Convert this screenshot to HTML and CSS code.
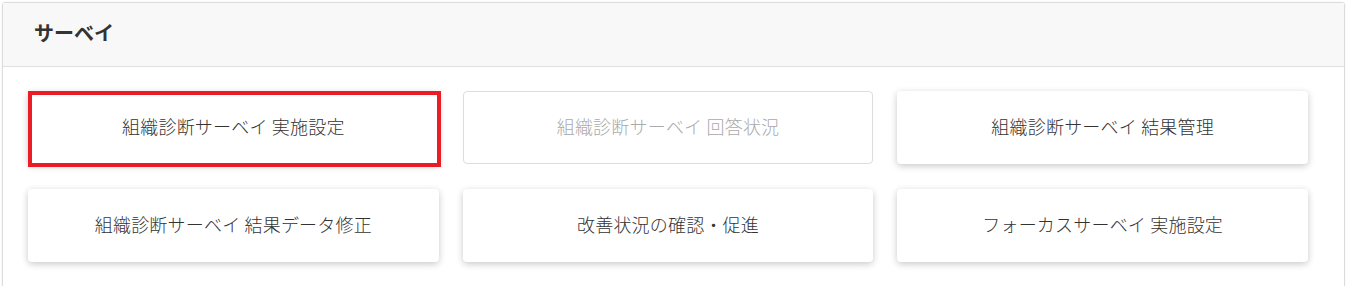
FILE: index.html
```html
<!DOCTYPE html>
<html lang="ja">
<head>
<meta charset="utf-8">
<title>サーベイ</title>
<link rel="stylesheet" href="styles.css">
</head>
<body>
<section class="card">
  <header class="card-header"><h2 class="card-title">サーベイ</h2></header>
  <div class="card-body">
    <div class="menu-grid">
      <a class="menu-btn is-highlighted">組織診断サーベイ 実施設定</a>
      <a class="menu-btn is-disabled">組織診断サーベイ 回答状況</a>
      <a class="menu-btn">組織診断サーベイ 結果管理</a>
      <a class="menu-btn">組織診断サーベイ 結果データ修正</a>
      <a class="menu-btn">改善状況の確認・促進</a>
      <a class="menu-btn">フォーカスサーベイ 実施設定</a>
    </div>
  </div>
</section>
</body>
</html>
```

FILE: styles.css
```css
html, body {
  margin: 0;
  padding: 0;
  background: #ffffff;
}
body {
  font-family: "Noto Sans CJK JP", "Noto Sans", "Liberation Sans", sans-serif;
  color: #333333;
  padding: 2px 2px 0 2px;
}
.card {
  border: 1px solid #dcdcdc;
  border-radius: 3px;
  box-shadow: 0 0 2px rgba(0,0,0,0.08);
  background: #ffffff;
}
.card-header {
  height: 63px;
  background: #f8f8f8;
  border-bottom: 1px solid #e0e0e0;
  display: flex;
  align-items: center;
  padding-left: 31px;
}
.card-title {
  margin: 0 0 3px 0;
  font-size: 20px;
  font-weight: 700;
  color: #333333;
  line-height: 1;
}
.card-body {
  padding: 24px 36px 30px 25px;
}
.menu-grid {
  display: grid;
  grid-template-columns: repeat(3, 1fr);
  column-gap: 24px;
  row-gap: 25px;
}
.menu-btn {
  position: relative;
  height: 73px;
  box-sizing: border-box;
  padding-bottom: 4px;
  display: flex;
  align-items: center;
  justify-content: center;
  background: #ffffff;
  border-radius: 4px;
  box-shadow: 0 2px 7px rgba(0,0,0,0.22);
  font-size: 18px;
  font-weight: 300;
  letter-spacing: 0.2px;
  color: #333333;
  text-decoration: none;
}
.menu-btn.is-disabled {
  box-shadow: none;
  border: 1px solid #dddddd;
  color: #aaaaaa;
}
.menu-btn.is-highlighted::after {
  content: "";
  position: absolute;
  left: 0;
  top: 0;
  right: -2px;
  bottom: -3px;
  border: 4px solid #ec1c24;
}
```
